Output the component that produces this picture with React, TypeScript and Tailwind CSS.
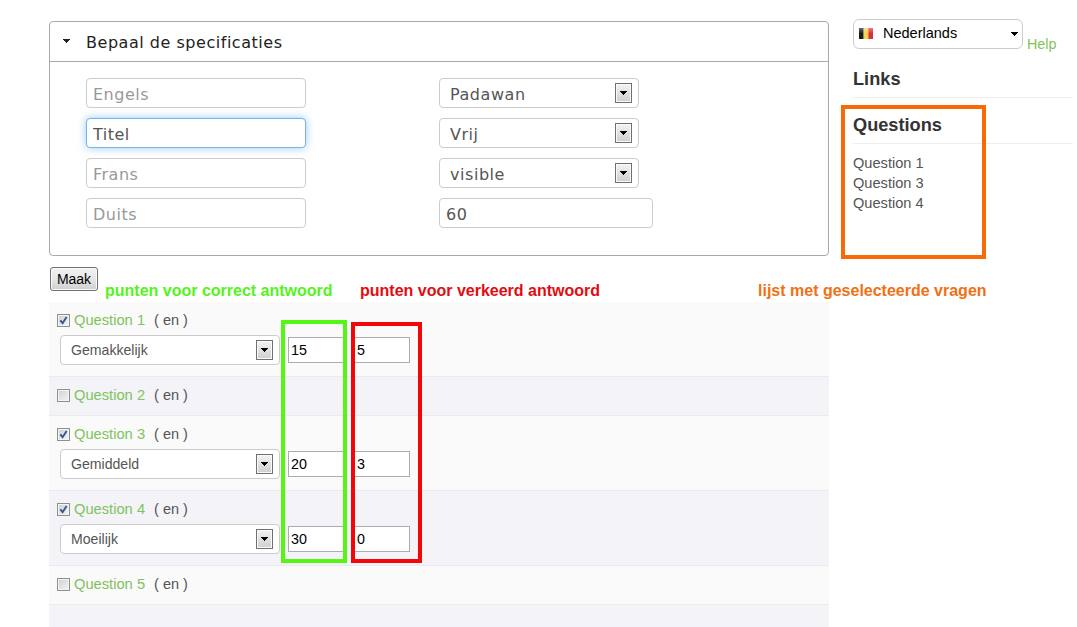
import React from "react";

function Arrow({ className = "" }: { className?: string }) {
  return (
    <svg width="8" height="4" viewBox="0 0 8 4" className={className} shapeRendering="crispEdges">
      <path d="M0 0h8L4 4z" fill="currentColor" />
    </svg>
  );
}

function SelectBox({ value, className }: { value: string; className: string }) {
  return (
    <div
      className={`flex h-[30px] items-center justify-between rounded-[4px] border border-[#ccc] bg-white pl-[10px] pr-[6px] text-[#555] ${className}`}
    >
      <span>{value}</span>
      <span className="flex h-5 w-[17px] shrink-0 items-center justify-start border border-[#707070] bg-linear-to-b from-[#f3f3f3] to-[#cfcfcf] pl-[3px] text-black shadow-[inset_0_0_0_1px_#fafafa]">
        <Arrow />
      </span>
    </div>
  );
}

function TextField({ placeholder, value, className = "" }: { placeholder?: string; value?: string; className?: string }) {
  return (
    <input
      className={`block h-[30px] rounded-[4px] border bg-white px-[6px] pt-[2px] tracking-[0.5px] text-[#555] outline-none placeholder:text-[#999] placeholder:opacity-100 ${className}`}
      placeholder={placeholder}
      defaultValue={value}
    />
  );
}

function Checkbox({ checked }: { checked: boolean }) {
  return (
    <span className="flex size-[13px] shrink-0 items-center justify-center border border-[#8e8f8f] bg-linear-to-br from-[#cbcfd5] to-[#f6f6f6] shadow-[inset_0_0_0_1px_#f4f4f4]">
      {checked && (
        <svg width="9" height="9" viewBox="0 0 9 9">
          <path d="M1.3 4.4 3.6 7.2 7.6 1" fill="none" stroke="#3b5390" strokeWidth="1.9" />
        </svg>
      )}
    </span>
  );
}

type Question = { id: number; level?: string; good?: string; bad?: string };

const questions: Question[] = [
  { id: 1, level: "Gemakkelijk", good: "15", bad: "5" },
  { id: 2 },
  { id: 3, level: "Gemiddeld", good: "20", bad: "3" },
  { id: 4, level: "Moeilijk", good: "30", bad: "0" },
  { id: 5 },
];

function Points({ value, className = "" }: { value?: string; className?: string }) {
  return (
    <input
      defaultValue={value}
      className={`h-[26px] w-[57px] border border-[#abadb3] bg-white px-[2px] text-[14.3px] text-black outline-none ${className}`}
    />
  );
}

function QuestionRow({ q }: { q: Question }) {
  return (
    <li
      className={`border-t border-[#ebebed] pl-2 pt-[9px] odd:bg-[#fafafa] even:bg-[#f3f3f8] first:border-white ${
        q.level ? "h-[75px]" : "h-[39px]"
      }`}
    >
      <div className="flex h-[18px] items-center leading-[18px]">
        <Checkbox checked={!!q.level} />
        <a className="ml-1 text-[14.7px] text-[#7fc35c]">Question {q.id}</a>
        <span className="ml-[9px]">( en )</span>
      </div>
      {q.level && (
        <div className="mt-[6px] flex items-center pl-[3px]">
          <SelectBox value={q.level} className="w-[220px] text-[14.1px] [&>span:first-child]:pt-px" />
          <Points value={q.good} className="ml-2" />
          <Points value={q.bad} className="ml-2 pl-[3px]" />
        </div>
      )}
    </li>
  );
}

function Specifications() {
  return (
    <section className="h-[235px] rounded-[4px] border border-[#aaa] font-['Verdana','DejaVu_Sans',sans-serif] text-[16px]">
      <header className="flex h-10 items-center border-b border-[#aaa] pl-3 text-[#222]">
        <Arrow className="-mt-px" />
        <h2 className="ml-4 whitespace-nowrap pt-[2px] tracking-[0.53px]">Bepaal de specificaties</h2>
      </header>
      <div className="flex pl-9 pt-4">
        <div className="flex w-[353px] flex-col gap-[10px]">
          <TextField placeholder="Engels" className="w-[220px] border-[#ccc]" />
          <TextField
            value="Titel"
            className="w-[220px] border-[#75b5e6] shadow-[0_0_8px_rgba(82,168,236,0.6)]"
          />
          <TextField placeholder="Frans" className="w-[220px] border-[#ccc]" />
          <TextField placeholder="Duits" className="w-[220px] border-[#ccc]" />
        </div>
        <div className="flex flex-col gap-[10px]">
          <SelectBox value="Padawan" className="w-[200px] tracking-[0.55px] [&>span:first-child]:pt-1" />
          <SelectBox value="Vrij" className="w-[200px] tracking-[0.55px] [&>span:first-child]:pt-1" />
          <SelectBox value="visible" className="w-[200px] tracking-[0.55px] [&>span:first-child]:pt-1" />
          <TextField value="60" className="w-[214px] border-[#ccc]" />
        </div>
      </div>
    </section>
  );
}

function BelgianFlag() {
  return (
    <svg width="14" height="11" viewBox="0 0 15 12" preserveAspectRatio="none" className="-mt-[2px]">
      <defs>
        <linearGradient id="shine" x1="0" y1="0" x2="0" y2="1">
          <stop offset="0" stopColor="#fff" stopOpacity="0.35" />
          <stop offset="1" stopColor="#fff" stopOpacity="0" />
        </linearGradient>
      </defs>
      <path d="M0 0h5v12H0z" fill="#1c1a1a" />
      <path d="M5 0h5v12H5z" fill="#f8d34a" />
      <path d="M10 0h5v12h-5z" fill="#dc3038" />
      <path d="M0 0h15v6H0z" fill="url(#shine)" />
    </svg>
  );
}

function Sidebar() {
  return (
    <aside className="ml-6 w-[220px] pt-[19px]">
      <div className="flex h-[30px]">
        <div className="flex h-[30px] w-[170px] shrink-0 items-center rounded-[6px] border border-[#ccc] bg-white pl-[5px] pr-1 text-black">
          <BelgianFlag />
          <span className="ml-[10px]">Nederlands</span>
          <Arrow className="ml-auto" />
        </div>
        <a className="ml-1 mt-[15px] text-[14.3px] leading-5 text-[#7fc35c]">Help</a>
      </div>
      <h3 className="mt-[19px] h-[30px] border-b border-[#eee] text-[18.2px] font-bold leading-[22px] text-[#333]">Links</h3>
      <h3 className="mt-4 h-[30px] border-b border-[#eee] text-[18.2px] font-bold leading-[22px] text-[#333]">Questions</h3>
      <ul className="mt-[9px] text-[14.6px] leading-5">
        <li>Question 1</li>
        <li>Question 3</li>
        <li>Question 4</li>
      </ul>
    </aside>
  );
}

export default function App() {
  return (
    <div className="relative flex h-[627px] w-[1077px] overflow-hidden bg-white pl-[49px] font-['Liberation_Sans',Arial,sans-serif] text-[14.5px] text-[#555]">
      <main className="w-[780px] shrink-0 pt-[21px]">
        <Specifications />
        <button className="ml-px mt-[11px] block h-6 w-12 rounded-[3px] border border-[#707070] bg-linear-to-b from-[#f2f2f2] via-[#e6e6e6] to-[#cfcfcf] text-[14px] leading-[22px] text-black shadow-[inset_0_0_0_1px_#fafafa]">
          Maak
        </button>
        <ul className="mt-[10px]">
          {questions.map((q) => (
            <QuestionRow key={q.id} q={q} />
          ))}
          <li className="h-[39px] border-t border-[#ebebed] bg-[#f3f3f8]" />
        </ul>
      </main>
      <Sidebar />

      <p className="absolute left-[105px] top-[282px] whitespace-nowrap text-[16px] font-bold leading-[18px] text-[#55f31c]">
        punten voor correct antwoord
      </p>
      <p className="absolute left-[360px] top-[282px] whitespace-nowrap text-[16px] font-bold leading-[18px] text-[#e30b0f]">
        punten voor verkeerd antwoord
      </p>
      <p className="absolute left-[758px] top-[282px] whitespace-nowrap text-[16px] font-bold leading-[18px] text-[#f07014]">
        lijst met geselecteerde vragen
      </p>
      <div className="absolute left-[281px] top-[320px] h-[243px] w-[66px] border-4 border-[#55f614]" />
      <div className="absolute left-[351px] top-[322px] h-[241px] w-[71px] border-4 border-[#f30508]" />
      <div className="absolute left-[841px] top-[105px] h-[154px] w-[145px] border-4 border-[#f86a05]" />
    </div>
  );
}
